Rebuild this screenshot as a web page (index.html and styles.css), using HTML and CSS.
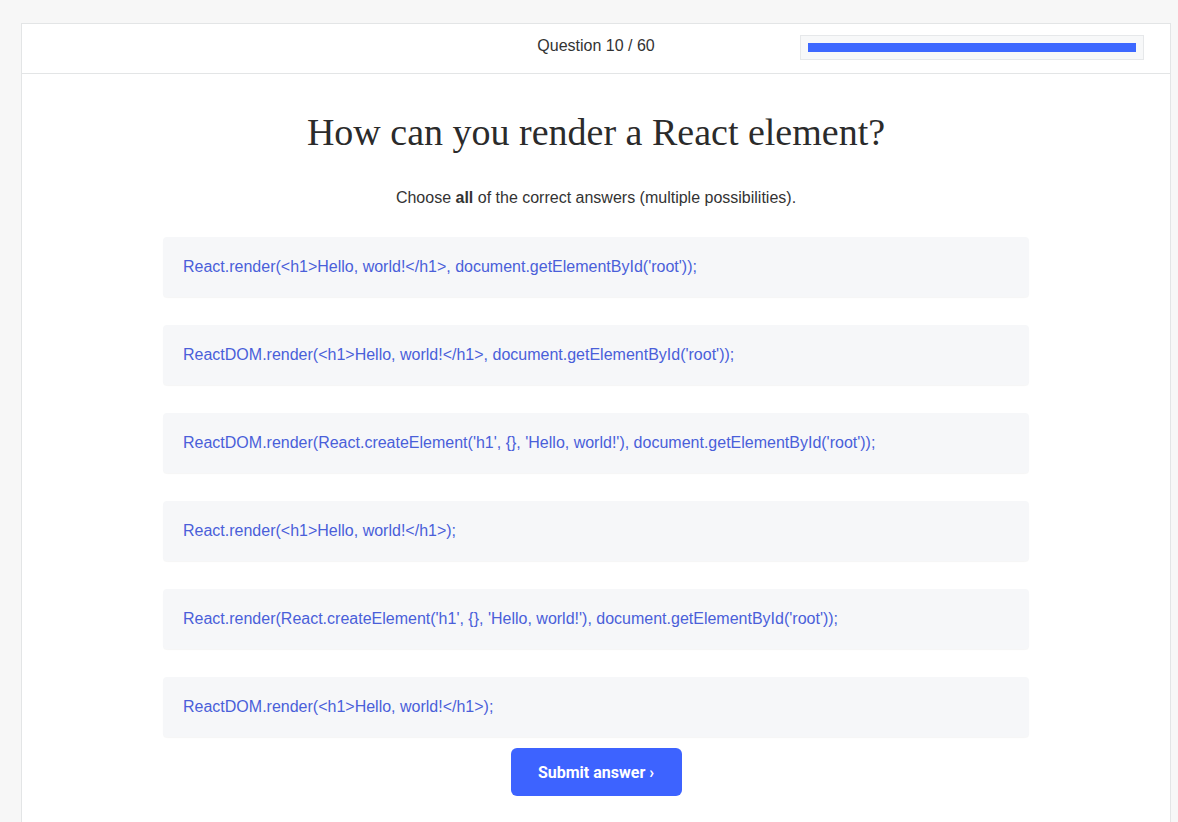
FILE: index.html
```html
<!DOCTYPE html>
<html lang="en">
<head>
<meta charset="utf-8">
<title>Quiz</title>
<link rel="stylesheet" href="styles.css">
</head>
<body>
<div class="card">
  <header class="card-header">
    <div class="spacer"></div>
    <div class="counter">Question 10 / 60</div>
    <div class="progress"><div class="progress-bar" style="width: 100%"></div></div>
  </header>
  <main class="card-body">
    <h1 class="question">How can you render a React element?</h1>
    <p class="hint">Choose <b>all</b> of the correct answers (multiple possibilities).</p>
    <ul class="answers">
      <li class="answer">React.render(&lt;h1&gt;Hello, world!&lt;/h1&gt;, document.getElementById('root'));</li>
      <li class="answer">ReactDOM.render(&lt;h1&gt;Hello, world!&lt;/h1&gt;, document.getElementById('root'));</li>
      <li class="answer">ReactDOM.render(React.createElement('h1', {}, 'Hello, world!'), document.getElementById('root'));</li>
      <li class="answer">React.render(&lt;h1&gt;Hello, world!&lt;/h1&gt;);</li>
      <li class="answer">React.render(React.createElement('h1', {}, 'Hello, world!'), document.getElementById('root'));</li>
      <li class="answer">ReactDOM.render(&lt;h1&gt;Hello, world!&lt;/h1&gt;);</li>
    </ul>
    <div class="actions">
      <button class="submit">Submit answer ›</button>
    </div>
  </main>
</div>
</body>
</html>
```

FILE: styles.css
```css
html, body {
  margin: 0;
  padding: 0;
  background: #f7f7f7;
  font-family: "Liberation Sans", Arial, sans-serif;
  color: #333;
}
body {
  padding: 23px 7px 0 21px;
  height: 822px;
  box-sizing: border-box;
  overflow: hidden;
}
.card {
  background: #fff;
  border: 1px solid #e3e5e6;
  border-bottom: none;
  height: 100%;
  box-sizing: border-box;
}
.card-header {
  display: grid;
  grid-template-columns: 1fr auto 1fr;
  align-items: start;
  height: 49px;
  border-bottom: 1px solid #e3e5e6;
  padding: 0 26px;
}
.counter {
  font-size: 16px;
  color: #333;
  line-height: 20px;
  margin-top: 12px;
}
.progress {
  justify-self: end;
  width: 328px;
  height: 9px;
  padding: 7px;
  border: 1px solid #e6e8ea;
  background-color: #f7f8f9;
  margin-top: 11px;
}
.progress-bar {
  height: 100%;
  background: #3d68ff;
}
.card-body {
  display: flex;
  flex-direction: column;
  align-items: center;
}
.question {
  font-family: "Liberation Serif", Georgia, serif;
  font-weight: normal;
  font-size: 38px;
  color: #2b2b2b;
  margin: 38px 0 0;
  line-height: 40px;
}
.hint {
  font-size: 16px;
  margin: 36px 0 0;
  line-height: 20px;
  color: #333;
}
.answers {
  list-style: none;
  margin: 29px 0 0;
  padding: 0;
  width: 866px;
  display: flex;
  flex-direction: column;
  gap: 28px;
}
.answer {
  height: 60px;
  box-sizing: border-box;
  display: flex;
  align-items: center;
  padding: 0 20px;
  background: #f6f7f9;
  border-radius: 4px;
  box-shadow: 0 1px 1px rgba(0, 0, 0, 0.04);
  color: #4a5fd9;
  font-size: 16px;
}
.actions {
  margin-top: 11px;
}
.submit {
  width: 171px;
  height: 48px;
  border: none;
  border-radius: 6px;
  background: #3d63ff;
  color: #fff;
  font-family: Roboto, "Liberation Sans", sans-serif;
  font-weight: bold;
  font-size: 16px;
  cursor: pointer;
}
```
